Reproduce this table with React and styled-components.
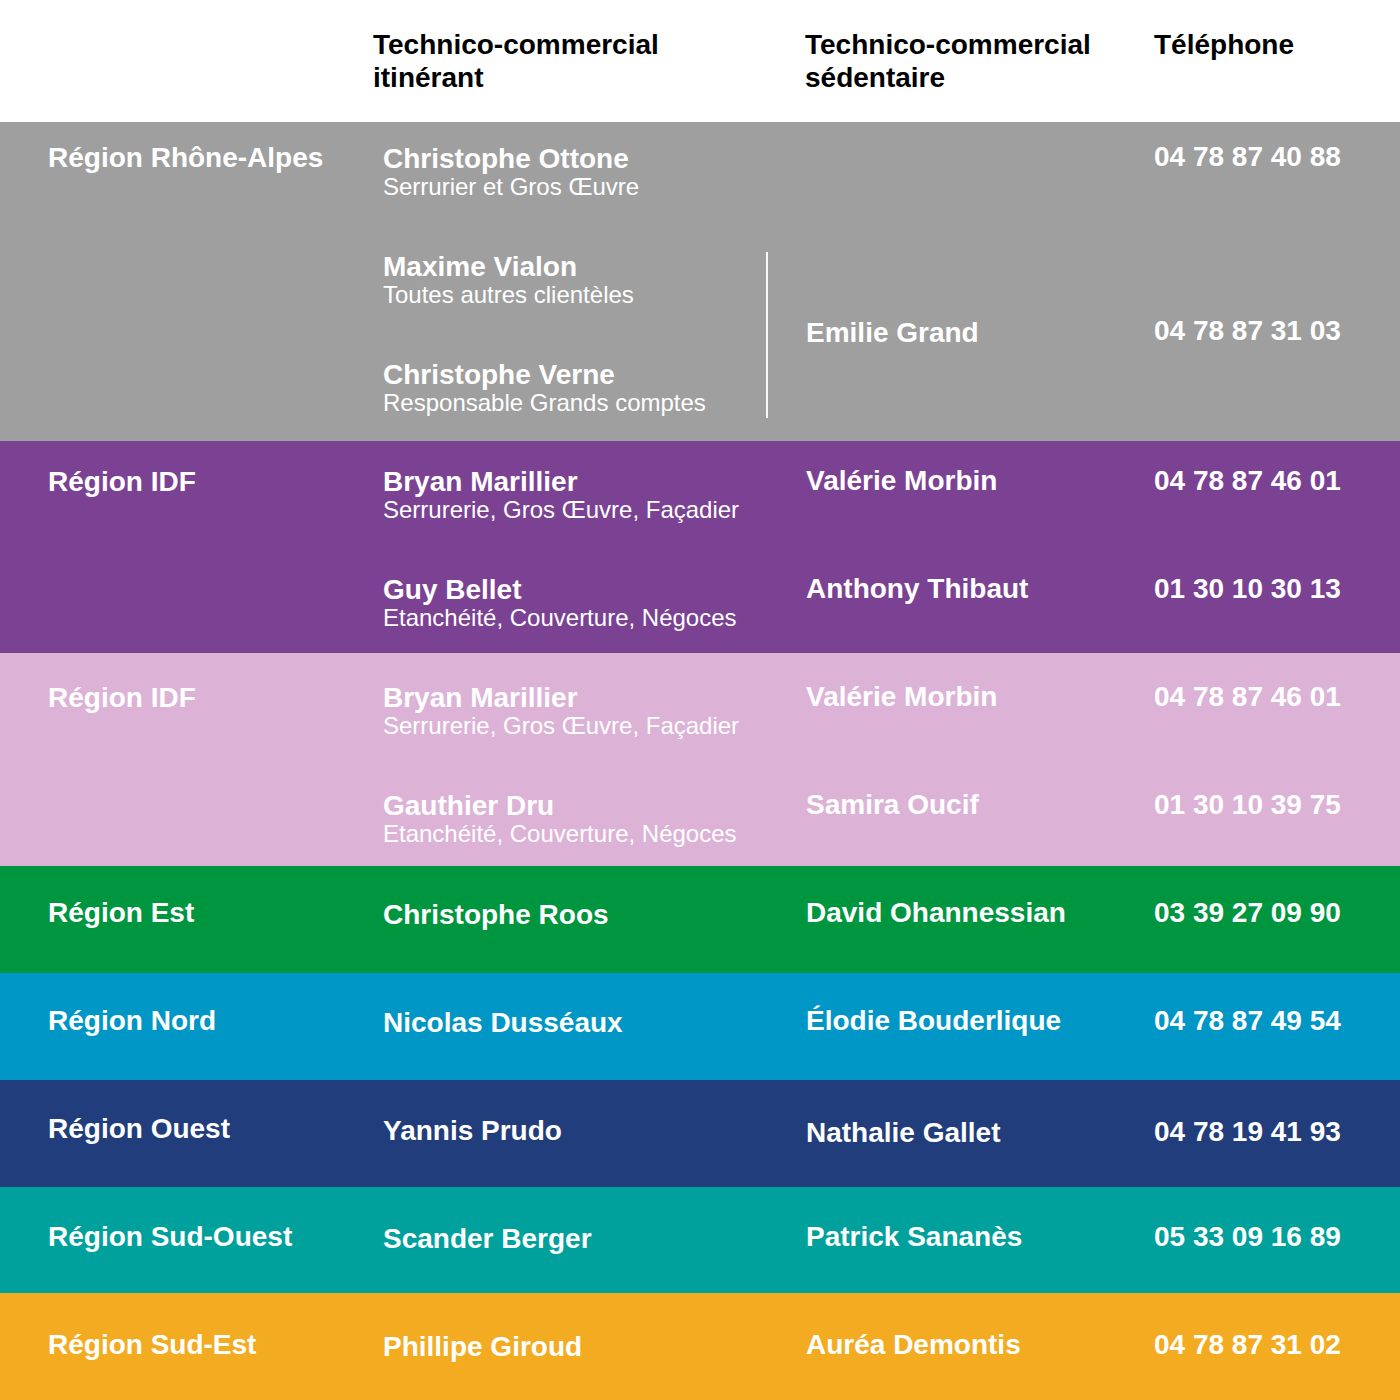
import React from "react";
import styled, { createGlobalStyle } from "styled-components";

const Global = createGlobalStyle`
  html, body { margin: 0; padding: 0; background: #ffffff; }
  body { font-family: "Liberation Sans", Arial, Helvetica, sans-serif; }
  * { box-sizing: border-box; }
`;

const Page = styled.div`
  width: 1400px;
  display: flex;
  flex-direction: column;
`;

const Header = styled.div`
  height: 122px;
  display: grid;
  grid-template-columns: 325px 432px 349px 1fr;
  padding: 28px 0 0 48px;
  color: #000;
  font-weight: 700;
  font-size: 28px;
  line-height: 33px;
`;

const HeadCell = styled.div``;

const Band = styled.div`
  background: ${(p) => p.$bg};
  height: ${(p) => p.$h}px;
  padding: ${(p) => p.$top}px 0 0 48px;
  display: grid;
  grid-template-columns: 335px 423px 348px 1fr;
  row-gap: 52px;
  align-content: start;
  color: #ffffff;
`;

const Bold = styled.div`
  font-weight: 700;
  font-size: 28px;
  line-height: 28px;
  white-space: nowrap;
  align-self: ${(p) => (p.$center ? "center" : "start")};
  transform: translateY(${(p) => p.$dy || 0}px);
`;

const Region = styled(Bold)``;
const Phone = styled(Bold)``;
const Sedentary = styled(Bold)``;

const Entry = styled.div`
  display: flex;
  flex-direction: column;
`;

const Name = styled(Bold)``;

const Sub = styled.div`
  font-weight: 400;
  font-size: 24px;
  line-height: 28px;
  white-space: nowrap;
`;

const Group = styled.div`
  width: 385px;
  display: flex;
  flex-direction: column;
  gap: 52px;
  border-right: 2px solid rgba(255, 255, 255, 0.92);
  padding: 1px 0;
  margin-top: -1px;
`;

const Empty = styled.div``;

const Person = ({ name, sub }) => (
  <Entry>
    <Name>{name}</Name>
    {sub && <Sub>{sub}</Sub>}
  </Entry>
);

const simple = [
  { bg: "#009640", region: "Région Est", itin: "Christophe Roos", sed: "David Ohannessian", phone: "03 39 27 09 90", h: 107, top: 33, sedDy: 0 },
  { bg: "#0096c6", region: "Région Nord", itin: "Nicolas Dusséaux", sed: "Élodie Bouderlique", phone: "04 78 87 49 54", h: 107, top: 34, sedDy: 0 },
  { bg: "#213d7b", region: "Région Ouest", itin: "Yannis Prudo", sed: "Nathalie Gallet", phone: "04 78 19 41 93", h: 107, top: 35, sedDy: 4 },
  { bg: "#00a19c", region: "Région Sud-Ouest", itin: "Scander Berger", sed: "Patrick Sananès", phone: "05 33 09 16 89", h: 106, top: 36, sedDy: 0 },
  { bg: "#f3ac22", region: "Région Sud-Est", itin: "Phillipe Giroud", sed: "Auréa Demontis", phone: "04 78 87 31 02", h: 107, top: 38, sedDy: 0 },
];

const idf = (bg, h, top, second) => (
  <Band $bg={bg} $h={h} $top={top}>
    <Region>Région IDF</Region>
    <Person name="Bryan Marillier" sub="Serrurerie, Gros Œuvre, Façadier" />
    <Sedentary $dy={-1}>Valérie Morbin</Sedentary>
    <Phone $dy={-1}>04 78 87 46 01</Phone>
    <Empty />
    <Person name={second.itin} sub="Etanchéité, Couverture, Négoces" />
    <Sedentary $dy={-1}>{second.sed}</Sedentary>
    <Phone $dy={-1}>{second.phone}</Phone>
  </Band>
);

export default function App() {
  return (
    <Page>
      <Global />
      <Header>
        <Empty />
        <HeadCell>
          Technico-commercial
          <br />
          itinérant
        </HeadCell>
        <HeadCell>
          Technico-commercial
          <br />
          sédentaire
        </HeadCell>
        <HeadCell>Téléphone</HeadCell>
      </Header>

      <Band $bg="#9f9f9f" $h={319} $top={23}>
        <Region $dy={-1}>Région Rhône-Alpes</Region>
        <Person name="Christophe Ottone" sub="Serrurier et Gros Œuvre" />
        <Empty />
        <Phone $dy={-2}>04 78 87 40 88</Phone>
        <Empty />
        <Group>
          <Person name="Maxime Vialon" sub="Toutes autres clientèles" />
          <Person name="Christophe Verne" sub="Responsable Grands comptes" />
        </Group>
        <Sedentary $center $dy={-3}>Emilie Grand</Sedentary>
        <Phone $center $dy={-5}>04 78 87 31 03</Phone>
      </Band>

      {idf("#7b4193", 212, 27, { itin: "Guy Bellet", sed: "Anthony Thibaut", phone: "01 30 10 30 13" })}
      {idf("#dcb3d6", 213, 31, { itin: "Gauthier Dru", sed: "Samira Oucif", phone: "01 30 10 39 75" })}

      {simple.map((r) => (
        <Band key={r.region} $bg={r.bg} $h={r.h} $top={r.top}>
          <Region>{r.region}</Region>
          <Name $dy={2}>{r.itin}</Name>
          <Sedentary $dy={r.sedDy}>{r.sed}</Sedentary>
          <Phone $dy={r.sedDy ? 3 : 0}>{r.phone}</Phone>
        </Band>
      ))}
    </Page>
  );
}
